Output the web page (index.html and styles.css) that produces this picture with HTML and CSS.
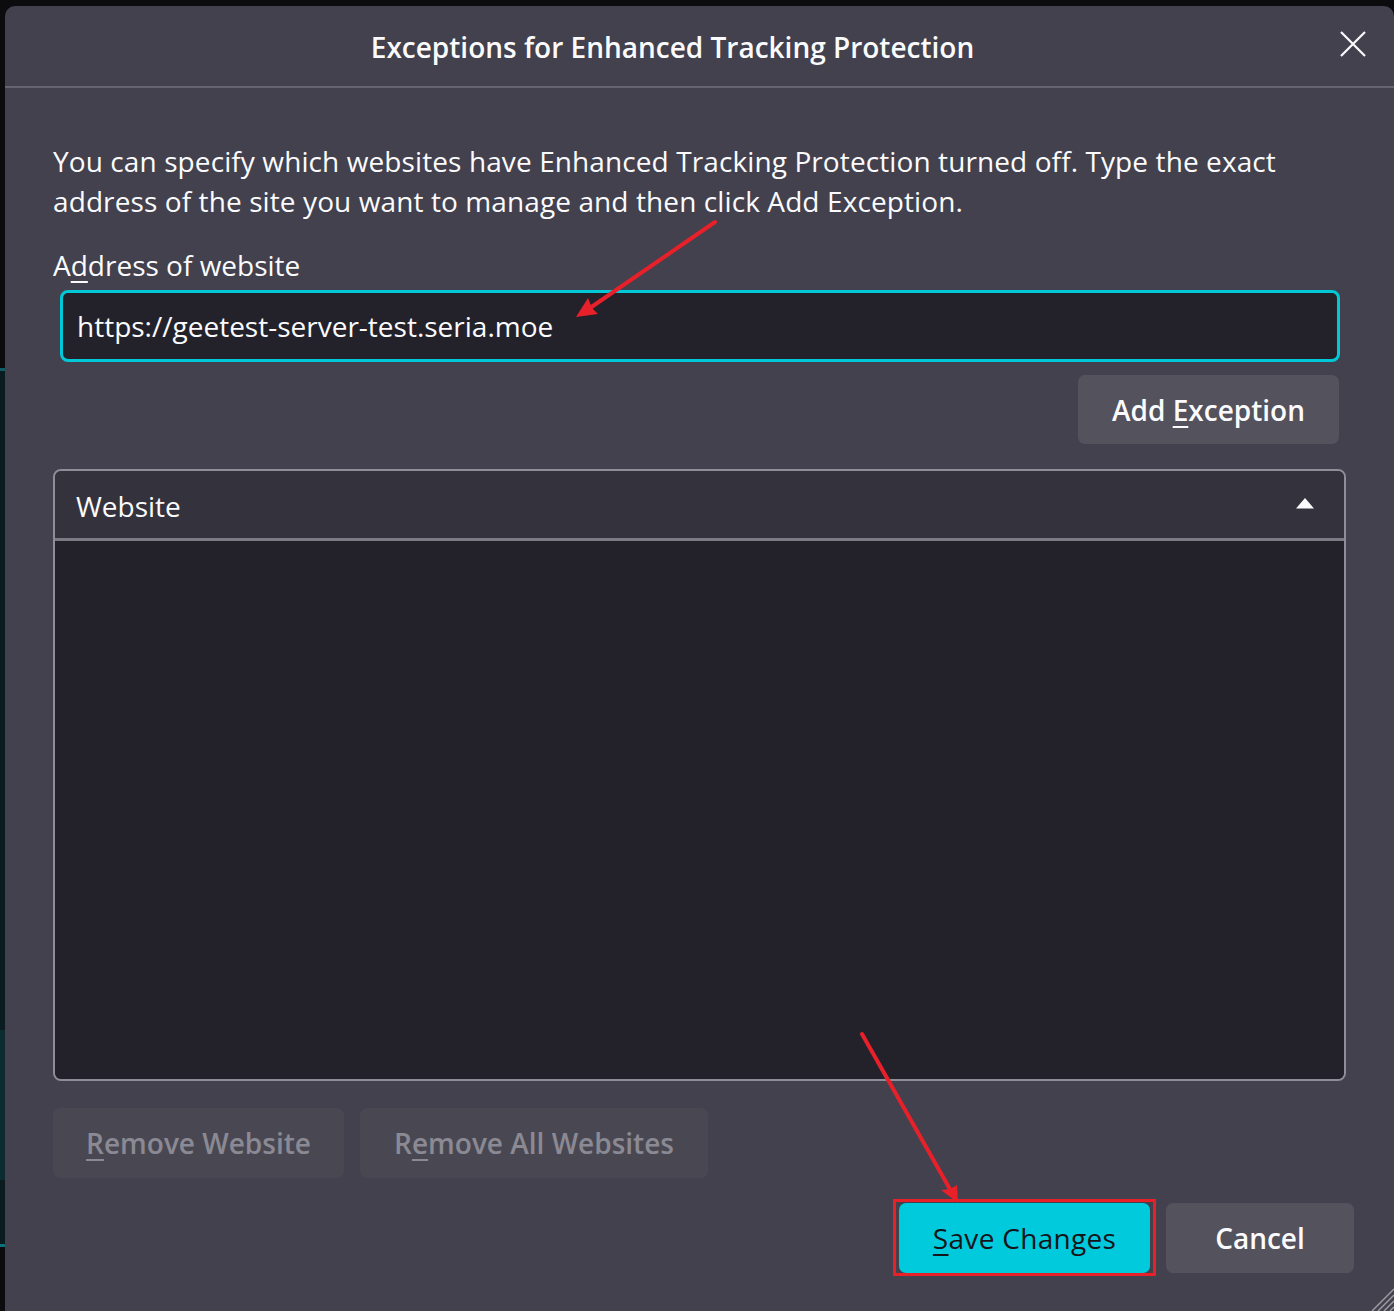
FILE: index.html
```html
<!DOCTYPE html>
<html lang="en">
<head>
<meta charset="utf-8">
<title>Exceptions for Enhanced Tracking Protection</title>
<link rel="stylesheet" href="styles.css">
</head>
<body>
<div class="edge"></div>
<div class="dialog">
  <header class="dlg-header">
    <h1 class="dlg-title">Exceptions for Enhanced Tracking Protection</h1>
    <button class="close-btn" aria-label="Close">
      <svg width="26" height="26" viewBox="0 0 26 26"><path d="M1 1 L25 25 M25 1 L1 25" stroke="#fbfbfe" stroke-width="2.2" fill="none"/></svg>
    </button>
  </header>
  <main class="dlg-body">
    <p class="desc">You can specify which websites have Enhanced Tracking Protection turned off. Type the exact<br>address of the site you want to manage and then click Add Exception.</p>
    <label class="field-label">A<u>d</u>dress of website</label>
    <div class="url-input">https://geetest-server-test.seria.moe</div>
    <div class="add-row"><button class="btn add">Add <u>E</u>xception</button></div>
    <div class="tree">
      <div class="tree-head">
        <span>Website</span>
        <svg class="sort" width="18" height="11" viewBox="0 0 18 11"><polygon points="9,0 18,10.5 0,10.5" fill="#fbfbfe"/></svg>
      </div>
      <div class="tree-body"></div>
    </div>
    <div class="remove-row">
      <button class="btn disabled rm1"><u>R</u>emove Website</button>
      <button class="btn disabled rm2">R<u>e</u>move All Websites</button>
    </div>
    <div class="footer">
      <span class="highlight"><button class="btn primary"><u>S</u>ave Changes</button></span>
      <button class="btn cancel">Cancel</button>
    </div>
  </main>
  <svg class="resizer" width="26" height="26" viewBox="0 0 26 26">
    <path d="M26 4 L4 26 M26 10 L10 26 M26 16 L16 26 M26 22 L22 26" stroke="#9c9ba4" stroke-width="1.5"/>
  </svg>
</div>
<svg class="annotations" width="1394" height="1311" viewBox="0 0 1394 1311">
  <line x1="715" y1="222" x2="590" y2="308" stroke="#e8202a" stroke-width="4" stroke-linecap="round"/>
  <polygon points="576,317 588,298 592,308 598,314" fill="#e8202a"/>
  <line x1="862" y1="1034" x2="951" y2="1191" stroke="#e8202a" stroke-width="4" stroke-linecap="round"/>
  <polygon points="958,1203 941,1190 950,1189 957,1185" fill="#e8202a"/>
</svg>
</body>
</html>
```
FILE: styles.css
```css
* { box-sizing: border-box; }
html, body { margin: 0; padding: 0; }
body {
  width: 1394px;
  height: 1311px;
  overflow: hidden;
  background: #0c0c0f;
  display: flex;
  font-family: "Open Sans", "Noto Sans", sans-serif;
  color: #fbfbfe;
  position: relative;
}
.edge {
  width: 5px;
  flex: none;
  background: linear-gradient(to bottom,
    #0c0c0f 0, #0c0c0f 368px, #0f5e66 368px, #0f5e66 371px,
    #0a1c1f 371px, #0a1c1f 1030px, #0c2c31 1030px, #0c2c31 1180px,
    #0a1c1f 1180px, #0a1c1f 1244px, #10707a 1244px, #10707a 1247px,
    #0c0c0f 1247px);
}
.dialog {
  flex: 1;
  margin-top: 6px;
  background: #42414d;
  border-top-left-radius: 10px;
  border-top-right-radius: 10px;
  display: flex;
  flex-direction: column;
  position: relative;
}
.dlg-header {
  height: 82px;
  border-bottom: 2px solid #66656f;
  display: flex;
  align-items: center;
  padding-right: 28px;
}
.dlg-title {
  flex: 1;
  margin: 0;
  text-align: center;
  font-size: 28px;
  font-weight: 600;
  padding-top: 2px;
}
.close-btn {
  width: 26px;
  height: 26px;
  padding: 0;
  border: 0;
  background: none;
  display: flex;
  margin-top: -4px;
}
.dlg-body {
  padding: 53px 48px 0 48px;
  display: flex;
  flex-direction: column;
}
.desc {
  margin: 0;
  font-size: 28px;
  line-height: 40px;
  letter-spacing: 0.1px;
}
.field-label {
  margin-top: 24px;
  font-size: 28px;
  line-height: 40px;
}
u { text-decoration-thickness: 2px; text-underline-offset: 5px; }
.url-input {
  margin: 5px 6px 0 7px;
  height: 72px;
  border: 3px solid #00c8d7;
  border-radius: 8px;
  background: #23222b;
  padding: 0 14px;
  display: flex;
  align-items: center;
  font-size: 28px;
}
.add-row {
  display: flex;
  justify-content: flex-end;
  margin: 13px 7px 0 0;
}
.btn {
  font-family: inherit;
  font-size: 28px;
  font-weight: 600;
  color: #fbfbfe;
  background: #53525d;
  border: 0;
  border-radius: 7px;
  height: 69px;
  padding: 0;
}
.btn.add { width: 261px; }
.tree {
  margin-top: 25px;
  height: 612px;
  border: 2px solid #8f8e98;
  border-radius: 8px;
  overflow: hidden;
  display: flex;
  flex-direction: column;
}
.tree-head {
  height: 70px;
  flex: none;
  background: #34333d;
  border-bottom: 3px solid #7c7b85;
  display: flex;
  align-items: center;
  justify-content: space-between;
  padding: 2px 30px 0 21px;
  font-size: 28px;
}
.sort { margin-top: -4px; }
.tree-body { flex: 1; background: #23222b; }
.remove-row {
  margin-top: 27px;
  display: flex;
  gap: 16px;
}
.btn.disabled {
  height: 70px;
  background: #494852;
  color: #8b8a94;
}
.btn.rm1 { width: 291px; }
.btn.rm2 { width: 348px; }
.footer {
  margin-top: 25px;
  margin-right: -8px;
  display: flex;
  justify-content: flex-end;
  align-items: flex-start;
  gap: 10px;
}
.highlight {
  display: flex;
  border: 3px solid #e8202a;
  padding: 1px 3px 0 3px;
  margin-top: -4px;
}
.btn.primary {
  width: 251px;
  height: 70px;
  background: #00cadb;
  color: #15141a;
  font-weight: 400;
  letter-spacing: 0.3px;
}
.btn.cancel { width: 188px; height: 70px; }
.resizer {
  position: absolute;
  right: 0;
  bottom: 0;
}
.annotations {
  position: absolute;
  left: 0;
  top: 0;
  pointer-events: none;
}
```
